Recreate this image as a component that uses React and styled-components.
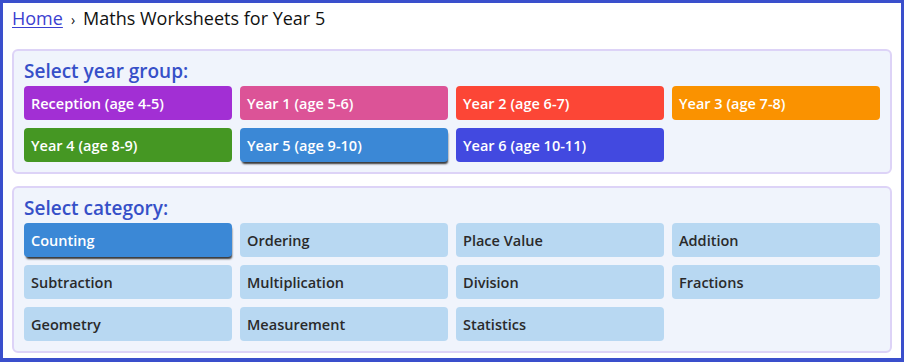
import React, { useState } from 'react';
import styled, { createGlobalStyle } from 'styled-components';

const GlobalStyle = createGlobalStyle`
  html, body {
    margin: 0;
    padding: 0;
    background: #ffffff;
  }
  * {
    box-sizing: border-box;
  }
`;

const Frame = styled.div`
  width: 904px;
  height: 362px;
  border: 3px solid #3a4fcc;
  border-bottom-width: 4px;
  padding: 3px 9px 0 9px;
  font-family: 'Open Sans', 'Noto Sans', sans-serif;
  overflow: hidden;
`;

const Breadcrumb = styled.div`
  display: flex;
  align-items: baseline;
  gap: 8px;
  font-size: 18px;
  line-height: 24px;
  color: #111;
  margin-bottom: 17px;
`;

const HomeLink = styled.a`
  color: #3b3fd0;
  text-decoration: underline;
  text-underline-offset: 2px;
`;

const Sep = styled.span`
  font-size: 14px;
`;

const Panel = styled.section`
  background: #f0f4fc;
  border: 2px solid #ddd3f7;
  border-radius: 6px;
  padding: 8px 10px 10px 10px;
  margin-bottom: 12px;
`;

const PanelTitle = styled.h2`
  margin: 0 0 3px 0;
  font-size: 19px;
  line-height: 24px;
  font-weight: 600;
  color: #3650c8;
`;

const Grid = styled.div`
  display: grid;
  grid-template-columns: repeat(4, 1fr);
  gap: 8px;
`;

const Choice = styled.button`
  height: 34px;
  border: none;
  border-radius: 4px;
  padding: 0 7px;
  text-align: left;
  font-family: inherit;
  font-size: 14.5px;
  font-weight: 600;
  cursor: pointer;
  background: ${(p) => p.$bg};
  color: ${(p) => (p.$light ? '#ffffff' : '#2a2a2a')};
  box-shadow: ${(p) => (p.$active ? '1px 3px 2px -1px rgba(20,20,20,0.85)' : 'none')};
`;

const years = [
  { label: 'Reception (age 4-5)', bg: '#a22fd4' },
  { label: 'Year 1 (age 5-6)', bg: '#dc5397' },
  { label: 'Year 2 (age 6-7)', bg: '#fc4636' },
  { label: 'Year 3 (age 7-8)', bg: '#fa9200' },
  { label: 'Year 4 (age 8-9)', bg: '#459723' },
  { label: 'Year 5 (age 9-10)', bg: '#3b88d6' },
  { label: 'Year 6 (age 10-11)', bg: '#4249e0' },
];

const categories = [
  'Counting',
  'Ordering',
  'Place Value',
  'Addition',
  'Subtraction',
  'Multiplication',
  'Division',
  'Fractions',
  'Geometry',
  'Measurement',
  'Statistics',
];

const App = () => {
  const [year, setYear] = useState(5);
  const [category, setCategory] = useState('Counting');

  return (
    <>
      <GlobalStyle />
      <Frame>
        <Breadcrumb>
          <HomeLink href="#">Home</HomeLink>
          <Sep>›</Sep>
          <span>Maths Worksheets for Year 5</span>
        </Breadcrumb>

        <Panel>
          <PanelTitle>Select year group:</PanelTitle>
          <Grid>
            {years.map((y, i) => (
              <Choice
                key={y.label}
                $bg={y.bg}
                $light
                $active={year === i}
                onClick={() => setYear(i)}
              >
                {y.label}
              </Choice>
            ))}
          </Grid>
        </Panel>

        <Panel>
          <PanelTitle>Select category:</PanelTitle>
          <Grid>
            {categories.map((c) => (
              <Choice
                key={c}
                $bg={category === c ? '#3b88d6' : '#b8d8f2'}
                $light={category === c}
                $active={category === c}
                onClick={() => setCategory(c)}
              >
                {c}
              </Choice>
            ))}
          </Grid>
        </Panel>
      </Frame>
    </>
  );
};

export default App;
